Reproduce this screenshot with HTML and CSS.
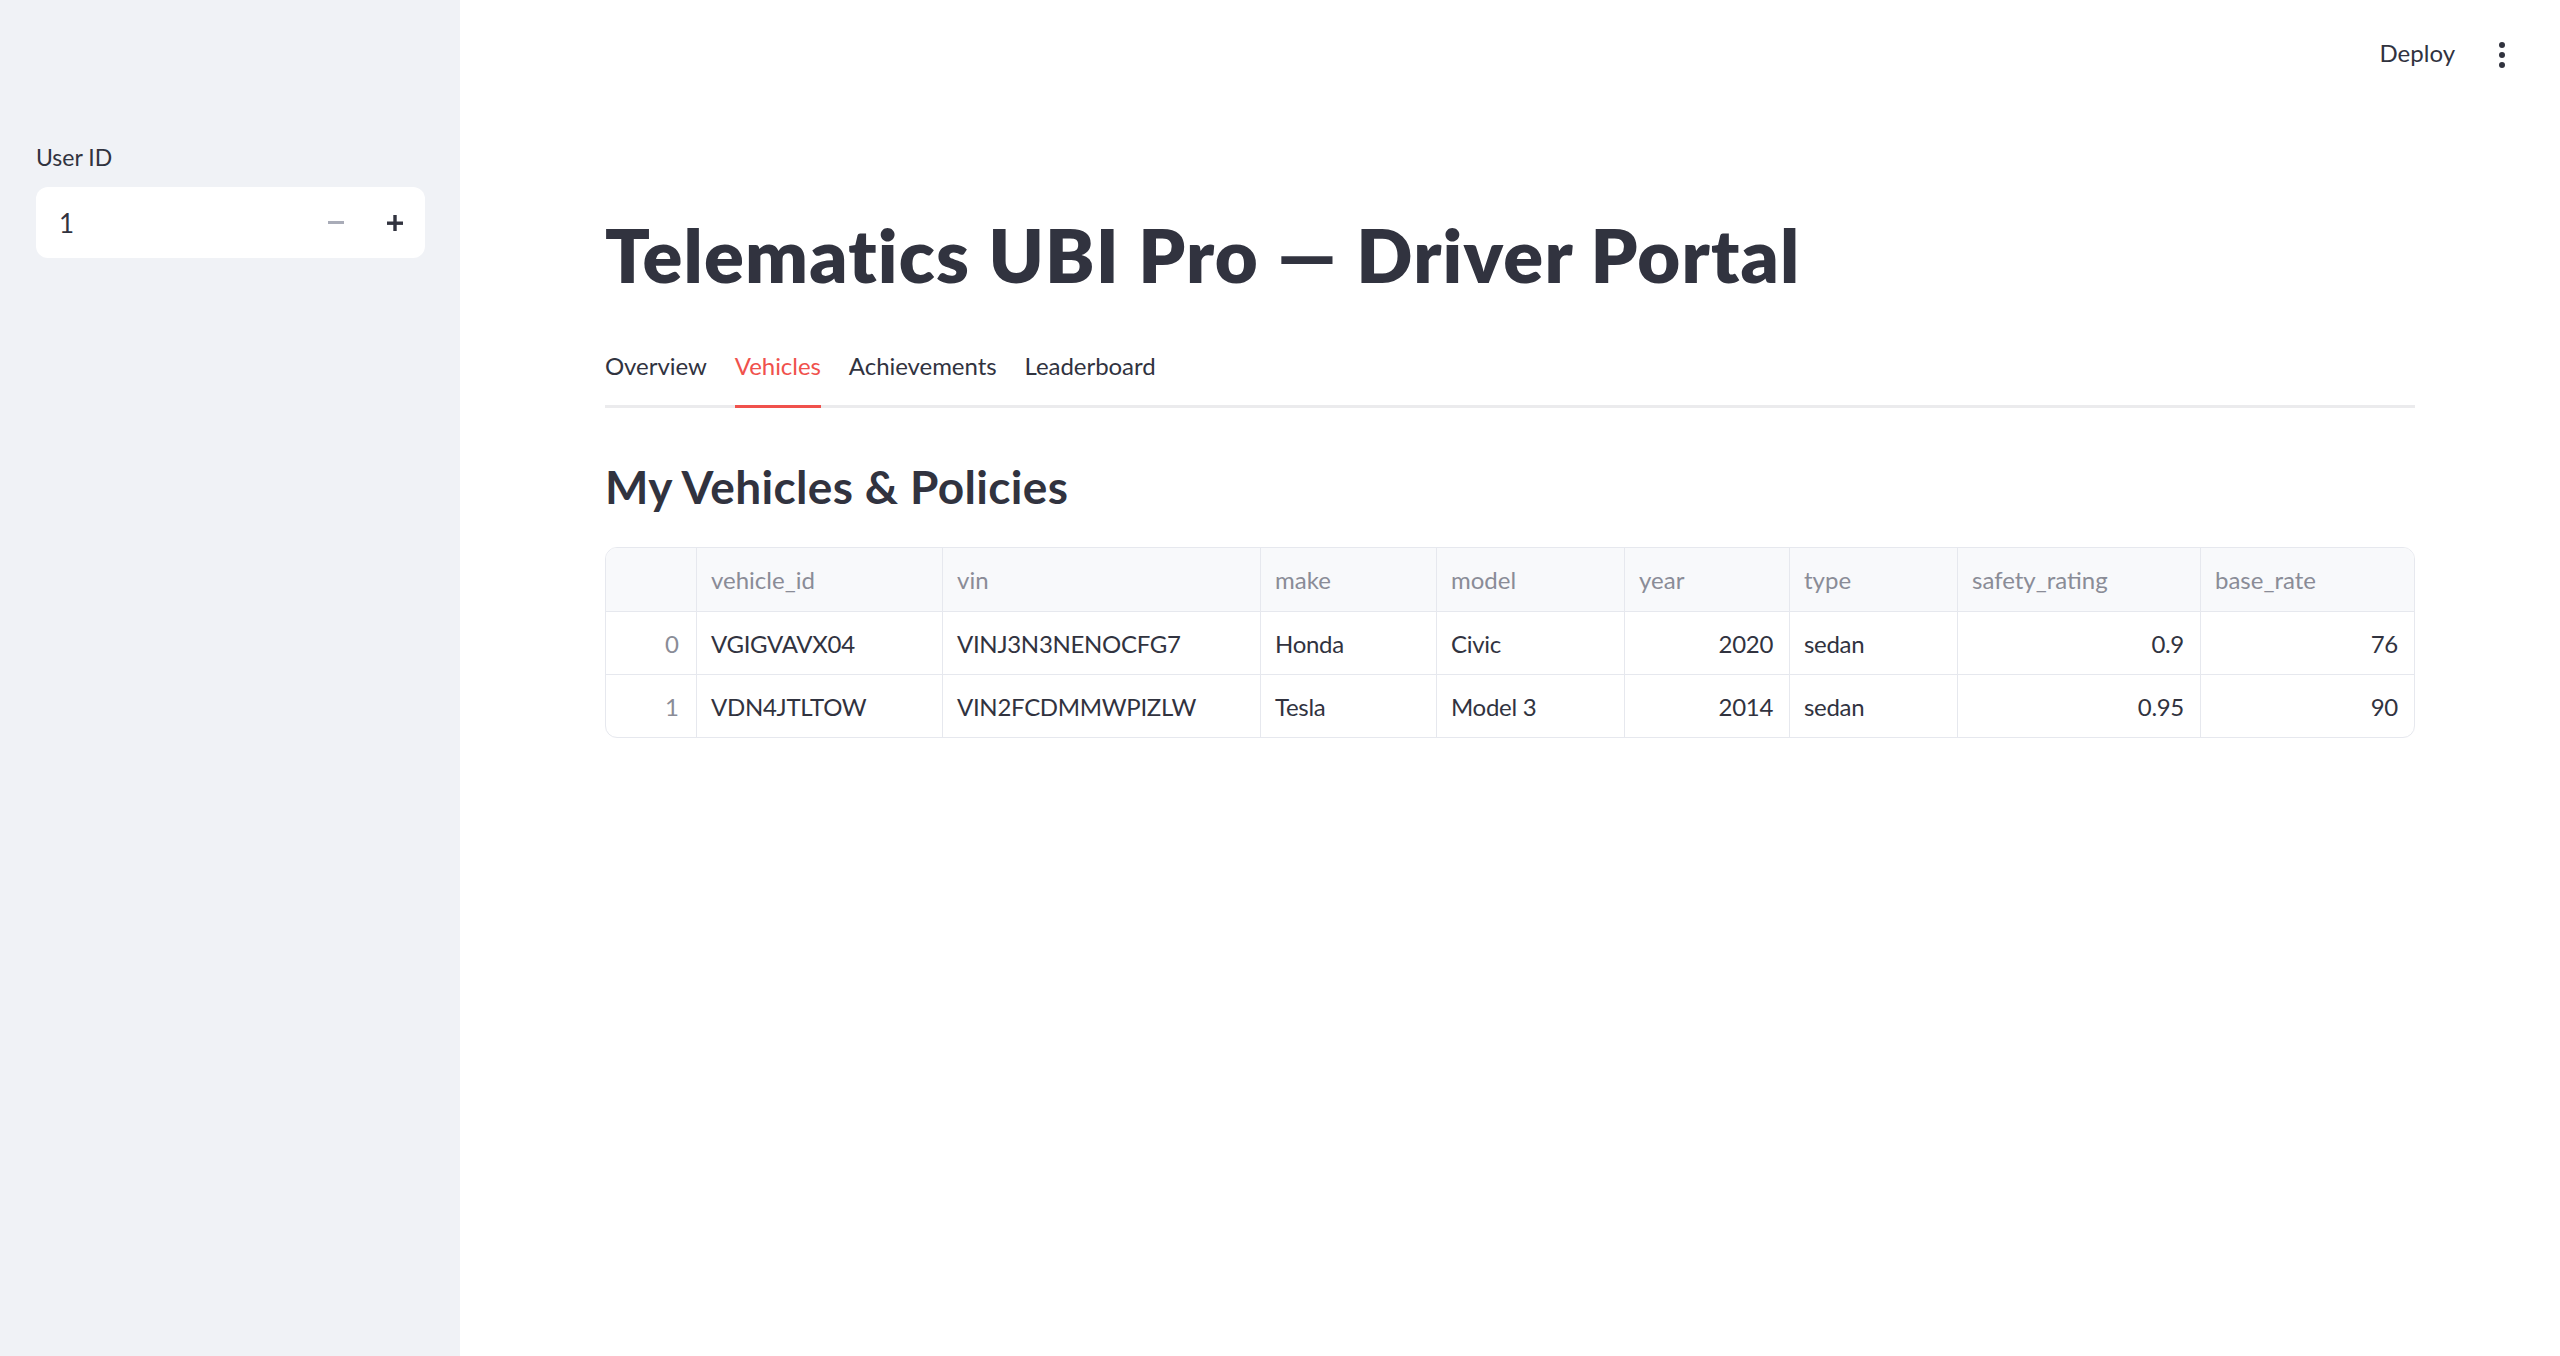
FILE: index.html
```html
<!DOCTYPE html>
<html lang="en">
<head>
<meta charset="utf-8">
<title>Telematics UBI Pro — Driver Portal</title>
<link rel="stylesheet" href="styles.css">
</head>
<body>
<div class="app">
  <aside class="sidebar">
    <label class="field-label">User ID</label>
    <div class="number-input">
      <span class="num-value">1</span>
      <div class="steppers">
        <span class="step step-minus"><svg width="16" height="4" viewBox="0 0 16 4"><rect x="0" y="0" width="16" height="3" fill="#a9acb8"/></svg></span>
        <span class="step step-plus"><svg width="16" height="16" viewBox="0 0 16 16"><rect x="0" y="6.5" width="16" height="3.4" fill="#31333f"/><rect x="6.3" y="0" width="3.4" height="16" fill="#31333f"/></svg></span>
      </div>
    </div>
  </aside>
  <main class="main">
    <header class="topbar">
      <span class="deploy">Deploy</span>
      <span class="kebab"><i></i><i></i><i></i></span>
    </header>
    <section class="content">
      <h1 class="title">Telematics UBI Pro — Driver Portal</h1>
      <nav class="tabs">
        <span class="tab">Overview</span>
        <span class="tab active">Vehicles</span>
        <span class="tab">Achievements</span>
        <span class="tab">Leaderboard</span>
      </nav>
      <h3 class="subheader">My Vehicles &amp; Policies</h3>
      <div class="table">
        <div class="cell head"></div>
        <div class="cell head">vehicle_id</div>
        <div class="cell head">vin</div>
        <div class="cell head">make</div>
        <div class="cell head">model</div>
        <div class="cell head">year</div>
        <div class="cell head">type</div>
        <div class="cell head">safety_rating</div>
        <div class="cell head last">base_rate</div>

        <div class="cell idx">0</div>
        <div class="cell code">VGIGVAVX04</div>
        <div class="cell code">VINJ3N3NENOCFG7</div>
        <div class="cell">Honda</div>
        <div class="cell">Civic</div>
        <div class="cell num">2020</div>
        <div class="cell">sedan</div>
        <div class="cell num">0.9</div>
        <div class="cell num last">76</div>

        <div class="cell idx bottom">1</div>
        <div class="cell code bottom">VDN4JTLTOW</div>
        <div class="cell code bottom">VIN2FCDMMWPIZLW</div>
        <div class="cell bottom">Tesla</div>
        <div class="cell bottom">Model 3</div>
        <div class="cell num bottom">2014</div>
        <div class="cell bottom">sedan</div>
        <div class="cell num bottom">0.95</div>
        <div class="cell num bottom last">90</div>
      </div>
    </section>
  </main>
</div>
</body>
</html>
```
FILE: styles.css
```css
* { box-sizing: border-box; }
html, body { margin: 0; padding: 0; background: #ffffff; }
body {
  font-family: "Lato", "Noto Sans", "Liberation Sans", sans-serif;
  color: #31333f;
}
.app {
  display: flex;
  min-height: 1356px;
}
.sidebar {
  width: 460px;
  flex: none;
  background: #f0f2f6;
  padding: 143px 35px 0 36px;
  display: flex;
  flex-direction: column;
}
.field-label {
  font-size: 23px;
  line-height: 28px;
  color: #31333f;
}
.number-input {
  margin-top: 16px;
  height: 71px;
  background: #ffffff;
  border-radius: 12px;
  display: flex;
  align-items: center;
  justify-content: space-between;
  padding: 0 22px 0 23px;
}
.num-value {
  font-size: 26px;
  color: #31333f;
}
.steppers {
  display: flex;
  align-items: center;
  gap: 43px;
}
.step { display: flex; align-items: center; }
.main {
  flex: 1;
  display: flex;
  flex-direction: column;
}
.topbar {
  height: 100px;
  display: flex;
  justify-content: flex-end;
  align-items: flex-start;
  padding: 39px 55px 0 0;
  gap: 44px;
}
.deploy {
  font-size: 24px;
  line-height: 28px;
  color: #31333f;
}
.kebab {
  display: flex;
  flex-direction: column;
  gap: 4px;
  padding-top: 3px;
}
.kebab i {
  display: block;
  width: 6px;
  height: 6px;
  border-radius: 50%;
  background: #31333f;
}
.content {
  padding: 110px 145px 0 145px;
  display: flex;
  flex-direction: column;
}
.title {
  margin: 0;
  font-size: 74px;
  line-height: 89px;
  font-weight: 800;
  color: #31333f;
  letter-spacing: 1.2px;
}
.tabs {
  margin-top: 52px;
  display: flex;
  gap: 28px;
  border-bottom: 3px solid #ebebed;
}
.tab {
  font-size: 24px;
  line-height: 30px;
  letter-spacing: -0.05px;
  padding-bottom: 24px;
  margin-bottom: -3px;
  border-bottom: 3px solid transparent;
  color: #31333f;
}
.tab.active {
  color: #f0514c;
  border-bottom-color: #f0514c;
}
.subheader {
  margin: 51px 0 0 0;
  font-size: 46px;
  line-height: 55px;
  font-weight: 700;
  letter-spacing: 0.35px;
  color: #31333f;
}
.table {
  margin-top: 33px;
  border: 1px solid #e6e8ee;
  border-radius: 12px;
  overflow: hidden;
  display: grid;
  grid-template-columns: 91px 246px 318px 176px 188px 165px 168px 243px 1fr;
  grid-template-rows: 64px 63px 62px;
  font-size: 24px;
}
.cell {
  display: flex;
  align-items: center;
  padding: 0 14px;
  border-right: 1px solid #e6e8ee;
  border-bottom: 1px solid #e6e8ee;
  color: #31333f;
  white-space: nowrap;
}
.cell.head {
  background: #f8f9fb;
  color: #8a8c97;
}
.cell:not(.head):not(.idx) {
  letter-spacing: -0.3px;
}
.cell.code {
  letter-spacing: -1.4px;
}
.cell.idx {
  justify-content: flex-end;
  color: #8a8c97;
  padding-right: 17px;
}
.cell.num {
  justify-content: flex-end;
  padding-right: 16px;
}
.cell.last { border-right: none; }
.cell.bottom { border-bottom: none; }
```
